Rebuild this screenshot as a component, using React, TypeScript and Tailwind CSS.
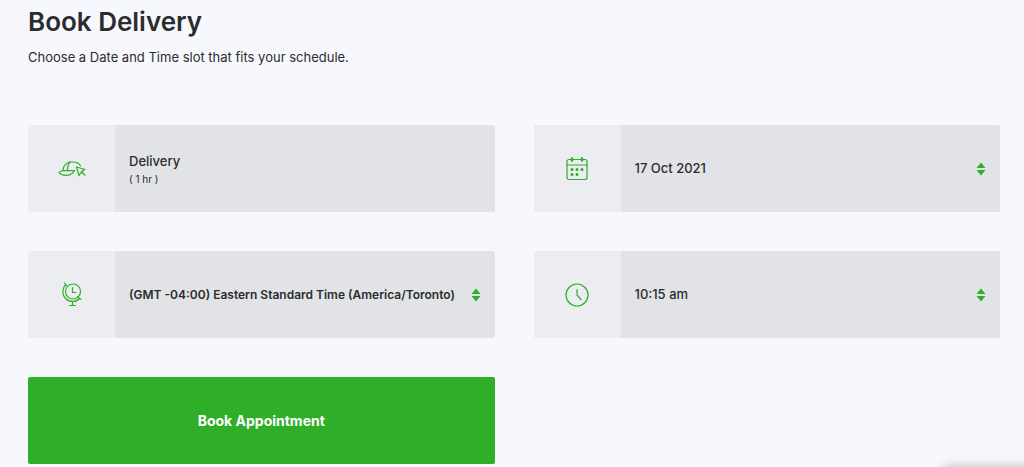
import type { ReactNode } from "react";

const dates = ["17 Oct 2021", "18 Oct 2021", "19 Oct 2021", "20 Oct 2021"];
const times = ["10:15 am", "11:15 am", "12:15 pm", "1:15 pm"];
const zones = [
  "(GMT -04:00) Eastern Standard Time (America/Toronto)",
  "(GMT -05:00) Central Standard Time (America/Chicago)",
];

const stroke = {
  fill: "none",
  stroke: "currentColor",
  strokeWidth: 1.2,
  strokeLinecap: "round",
  strokeLinejoin: "round",
} as const;

function ServiceIcon() {
  return (
    <svg width="28" height="18" viewBox="0 0 28 18" {...stroke} aria-hidden="true">
      <path d="M5 10.5C5.5 5 8.500 2 14 2c4.500 0 7.500 1 8.500 4" />
      <path d="M12 2C10 4 9.500 7 9.500 10.500" />
      <path d="M5 10.500C3.500 11 1.500 11.500 1 12.500c2 2.500 6 3.200 9 2.700 3.500-.6 5.500-2.700 6.500-4.700C13 11 9 10.500 5 10.500Z" />
      <path d="M18.500 7l8.500 2.500-3.200 1.800 3.200 4-3.400-3.400L21 15.500Z" />
    </svg>
  );
}

function CalendarIcon() {
  return (
    <svg width="22" height="24" viewBox="0 0 22 24" {...stroke} aria-hidden="true">
      <rect x="1" y="2.5" width="20" height="20" rx="2" />
      <path d="M1 8h20" />
      <path d="M6 1.500v2M16 1.500v2" strokeWidth="2.500" />
      <path d="M6 12.500h.01M11 12.500h.01M16 12.500h.01M6 17.500h.01M11 17.500h.01" strokeWidth="3" />
    </svg>
  );
}

function GlobeIcon() {
  return (
    <svg width="22" height="25" viewBox="0 0 22 25" {...stroke} aria-hidden="true">
      <circle cx="12" cy="9.500" r="7.500" />
      <path d="M11.500 5.500v5h3.500" />
      <path d="M3.500 1l2 2.500M4.500 2.500C1 6.500 1 13 4.500 16.500c4 4 10.500 4 14 0l1.500.800M18.500 16.500l-1.800-1.800" />
      <path d="M11.500 19.500V23.500M8.500 23.500h6" />
    </svg>
  );
}

function ClockIcon() {
  return (
    <svg width="24" height="24" viewBox="0 0 24 24" {...stroke} aria-hidden="true">
      <circle cx="12" cy="12" r="11" />
      <path d="M12 6.500V12l4 4.500" />
    </svg>
  );
}

function SortArrows() {
  return (
    <svg className="pointer-events-none shrink-0" width="10" height="14" viewBox="0 0 10 14" fill="#2fae29" aria-hidden="true">
      <path d="M5 .5L9.500 6h-9ZM5 13.500L9.500 8h-9Z" />
    </svg>
  );
}

function Field({ icon, children }: { icon: ReactNode; children: ReactNode }) {
  return (
    <div className="flex h-[87px] overflow-hidden rounded-xs bg-[#e2e3e7]">
      <div className="flex w-[87px] shrink-0 items-center justify-center bg-[#ecedf1] text-[#2fae29]">
        {icon}
      </div>
      {children}
    </div>
  );
}

type SelectFieldProps = { label: string; icon: ReactNode; options: string[]; textClass: string };

function SelectField({ label, icon, options, textClass }: SelectFieldProps) {
  return (
    <Field icon={icon}>
      <div className="flex min-w-0 flex-1 items-center pr-3.5">
        <select
          aria-label={label}
          className={`h-full min-w-0 flex-1 cursor-pointer appearance-none truncate bg-transparent pl-3.5 outline-none ${textClass}`}
        >
          {options.map((o) => (
            <option key={o}>{o}</option>
          ))}
        </select>
        <SortArrows />
      </div>
    </Field>
  );
}

export default function App() {
  return (
    <div className="relative min-h-screen overflow-hidden bg-[#f7f8fd] pl-7 pr-6 font-['Inter',sans-serif] text-[#2b2c2e]">
      <header className="pt-1">
        <h1 className="text-[26px] font-semibold leading-9">Book Delivery</h1>
        <p className="mt-[7px] text-[13px] leading-5">Choose a Date and Time slot that fits your schedule.</p>
      </header>

      <form className="mt-[58px] grid grid-cols-2 gap-[39px]" onSubmit={(e) => e.preventDefault()}>
        <Field icon={<ServiceIcon />}>
          <div className="flex flex-col justify-center pl-3.5">
            <span className="text-[13px] font-medium leading-5">Delivery</span>
            <span className="text-[10px] leading-4">( 1 hr )</span>
          </div>
        </Field>
        <SelectField label="Date" icon={<CalendarIcon />} options={dates} textClass="text-[13px] font-medium" />
        <SelectField label="Time zone" icon={<GlobeIcon />} options={zones} textClass="text-[12px] font-semibold" />
        <SelectField label="Time" icon={<ClockIcon />} options={times} textClass="text-[13px] font-medium" />
        <button
          type="submit"
          className="h-[87px] cursor-pointer rounded-xs bg-[#2fae29] text-[14px] font-bold text-white"
        >
          Book Appointment
        </button>
      </form>

      {/* Top shadow of the docked panel below the fold */}
      <div className="absolute -right-4 top-full h-10 w-24 shadow-[0_0_10px_rgba(0,0,0,0.25)]" />
    </div>
  );
}
